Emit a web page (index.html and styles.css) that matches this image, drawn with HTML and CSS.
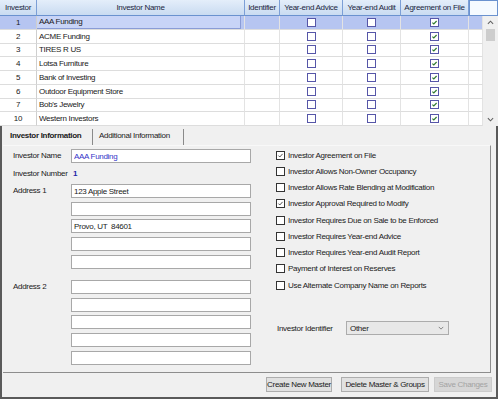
FILE: index.html
```html
<!DOCTYPE html>
<html lang="en">
<head>
  <meta charset="UTF-8">
  <title>Investors</title>
  <link rel="stylesheet" href="styles.css">
</head>
<body>
  <div class="window">
    <div class="grid-head">
      <div class="hcell w-num">Investor</div>
      <div class="hcell w-name">Investor Name</div>
      <div class="hcell w-id">Identifier</div>
      <div class="hcell w-adv">Year-end Advice</div>
      <div class="hcell w-aud">Year-end Audit</div>
      <div class="hcell w-agr">Agreement on File</div>
      <div class="hcell hcell-blank"></div>
    </div>

    <div class="grid-body">
      <div class="rows">
        <div class="row selected">
          <div class="cell w-num">1</div>
          <div class="cell w-name"><span class="focus">AAA Funding</span></div>
          <div class="cell w-id"></div>
          <div class="cell w-adv"><span class="gbox"></span></div>
          <div class="cell w-aud"><span class="gbox"></span></div>
          <div class="cell w-agr"><span class="gbox"><svg viewBox="0 0 8 8"><path d="M1.6 4.1 L3.2 5.7 L6.4 2.3" /></svg></span></div>
          <div class="cell w-pad"></div>
        </div>
        <div class="row">
          <div class="cell w-num">2</div>
          <div class="cell w-name">ACME Funding</div>
          <div class="cell w-id"></div>
          <div class="cell w-adv"><span class="gbox"></span></div>
          <div class="cell w-aud"><span class="gbox"></span></div>
          <div class="cell w-agr"><span class="gbox"><svg viewBox="0 0 8 8"><path d="M1.6 4.1 L3.2 5.7 L6.4 2.3" /></svg></span></div>
          <div class="cell w-pad"></div>
        </div>
        <div class="row">
          <div class="cell w-num">3</div>
          <div class="cell w-name">TIRES R US</div>
          <div class="cell w-id"></div>
          <div class="cell w-adv"><span class="gbox"></span></div>
          <div class="cell w-aud"><span class="gbox"></span></div>
          <div class="cell w-agr"><span class="gbox"><svg viewBox="0 0 8 8"><path d="M1.6 4.1 L3.2 5.7 L6.4 2.3" /></svg></span></div>
          <div class="cell w-pad"></div>
        </div>
        <div class="row">
          <div class="cell w-num">4</div>
          <div class="cell w-name">Lotsa Furniture</div>
          <div class="cell w-id"></div>
          <div class="cell w-adv"><span class="gbox"></span></div>
          <div class="cell w-aud"><span class="gbox"></span></div>
          <div class="cell w-agr"><span class="gbox"><svg viewBox="0 0 8 8"><path d="M1.6 4.1 L3.2 5.7 L6.4 2.3" /></svg></span></div>
          <div class="cell w-pad"></div>
        </div>
        <div class="row">
          <div class="cell w-num">5</div>
          <div class="cell w-name">Bank of Investing</div>
          <div class="cell w-id"></div>
          <div class="cell w-adv"><span class="gbox"></span></div>
          <div class="cell w-aud"><span class="gbox"></span></div>
          <div class="cell w-agr"><span class="gbox"><svg viewBox="0 0 8 8"><path d="M1.6 4.1 L3.2 5.7 L6.4 2.3" /></svg></span></div>
          <div class="cell w-pad"></div>
        </div>
        <div class="row">
          <div class="cell w-num">6</div>
          <div class="cell w-name">Outdoor Equipment Store</div>
          <div class="cell w-id"></div>
          <div class="cell w-adv"><span class="gbox"></span></div>
          <div class="cell w-aud"><span class="gbox"></span></div>
          <div class="cell w-agr"><span class="gbox"><svg viewBox="0 0 8 8"><path d="M1.6 4.1 L3.2 5.7 L6.4 2.3" /></svg></span></div>
          <div class="cell w-pad"></div>
        </div>
        <div class="row">
          <div class="cell w-num">7</div>
          <div class="cell w-name">Bob's Jewelry</div>
          <div class="cell w-id"></div>
          <div class="cell w-adv"><span class="gbox"></span></div>
          <div class="cell w-aud"><span class="gbox"></span></div>
          <div class="cell w-agr"><span class="gbox"><svg viewBox="0 0 8 8"><path d="M1.6 4.1 L3.2 5.7 L6.4 2.3" /></svg></span></div>
          <div class="cell w-pad"></div>
        </div>
        <div class="row">
          <div class="cell w-num">10</div>
          <div class="cell w-name">Western Investors</div>
          <div class="cell w-id"></div>
          <div class="cell w-adv"><span class="gbox"></span></div>
          <div class="cell w-aud"><span class="gbox"></span></div>
          <div class="cell w-agr"><span class="gbox"><svg viewBox="0 0 8 8"><path d="M1.6 4.1 L3.2 5.7 L6.4 2.3" /></svg></span></div>
          <div class="cell w-pad"></div>
        </div>
      </div>

      <div class="scrollbar">
        <svg class="arrow" viewBox="0 0 8 5"><path d="M1 4 L4 1 L7 4" /></svg>
        <div class="thumb"></div>
        <div class="track"></div>
        <svg class="arrow" viewBox="0 0 8 5"><path d="M1 1 L4 4 L7 1" /></svg>
      </div>
    </div>

    <div class="panel">
      <div class="tabs">
        <div class="tab tab-active">Investor Information</div>
        <div class="tab">Additional Information</div>
      </div>

      <div class="tabpage">
        <div class="form-col">
          <div class="frow">
            <span class="flabel">Investor Name</span>
            <input class="tbox tbox-blue" type="text" value="AAA Funding">
          </div>
          <div class="frow">
            <span class="flabel">Investor Number</span>
            <span class="numval">1</span>
          </div>
          <div class="frow">
            <span class="flabel">Address 1</span>
            <div class="inputs">
              <input class="tbox" type="text" value="123 Apple Street">
              <input class="tbox" type="text" value="">
              <input class="tbox" type="text" value="Provo, UT  84601">
              <input class="tbox" type="text" value="">
              <input class="tbox" type="text" value="">
            </div>
          </div>
          <div class="frow frow-gap">
            <span class="flabel">Address 2</span>
            <div class="inputs">
              <input class="tbox" type="text" value="">
              <input class="tbox" type="text" value="">
              <input class="tbox" type="text" value="">
              <input class="tbox" type="text" value="">
              <input class="tbox" type="text" value="">
            </div>
          </div>
        </div>

        <div class="check-col">
          <div class="check"><span class="cbox"><svg viewBox="0 0 9 9"><path d="M1.8 4.6 L3.6 6.4 L7.2 2.4" /></svg></span>Investor Agreement on File</div>
          <div class="check"><span class="cbox"></span>Investor Allows Non-Owner Occupancy</div>
          <div class="check"><span class="cbox"></span>Investor Allows Rate Blending at Modification</div>
          <div class="check"><span class="cbox"><svg viewBox="0 0 9 9"><path d="M1.8 4.6 L3.6 6.4 L7.2 2.4" /></svg></span>Investor Approval Required to Modify</div>
          <div class="check"><span class="cbox"></span>Investor Requires Due on Sale to be Enforced</div>
          <div class="check"><span class="cbox"></span>Investor Requires Year-end Advice</div>
          <div class="check"><span class="cbox"></span>Investor Requires Year-end Audit Report</div>
          <div class="check"><span class="cbox"></span>Payment of Interest on Reserves</div>
          <div class="check"><span class="cbox"></span>Use Alternate Company Name on Reports</div>

          <div class="ident-row">
            <span class="ident-label">Investor Identifier</span>
            <div class="select">
              <span>Other</span>
              <svg viewBox="0 0 8 5"><path d="M1 1 L4 4 L7 1" /></svg>
            </div>
          </div>
        </div>
      </div>

      <div class="buttons">
        <button class="btn btn-create">Create New Master</button>
        <button class="btn btn-delete">Delete Master &amp; Groups</button>
        <button class="btn btn-save" disabled>Save Changes</button>
      </div>
    </div>
  </div>
</body>
</html>
```

FILE: styles.css
```css
body {
  margin: 0;
  font-family: "Liberation Sans", Arial, sans-serif;
  font-size: 8px;
  letter-spacing: -0.3px;
  color: #1a1a1a;
  background: #ffffff;
}

.window {
  width: 498px;
  height: 399px;
  display: flex;
  flex-direction: column;
  overflow: hidden;
}

/* grid columns */
.w-num { width: 37px; }
.w-name { width: 208px; }
.w-id { width: 35px; }
.w-adv { width: 63px; }
.w-aud { width: 58px; }
.w-agr { width: 68px; }
.w-pad { width: 14px; }

.grid-head {
  display: flex;
  height: 16px;
}

.hcell {
  box-sizing: border-box;
  height: 16px;
  background: linear-gradient(#e4eefa, #c9dbf1);
  border-right: 1px solid #7c9fd6;
  border-bottom: 1px solid #6a92cf;
  color: #1c2640;
  display: flex;
  align-items: center;
  justify-content: center;
  white-space: nowrap;
}

.hcell-blank {
  width: 29px;
  background: #f5faff;
  border: 1px solid #6a92cf;
}

.grid-body {
  display: flex;
  height: 110px;
}

.rows {
  width: 483px;
}

.row {
  display: flex;
  height: 13.75px;
}

.cell {
  box-sizing: border-box;
  border-right: 1px solid #e3e3e3;
  border-bottom: 1px solid #dddddd;
  display: flex;
  align-items: center;
  justify-content: center;
  white-space: nowrap;
}

.cell.w-num {
  border-right-color: #cfcfcf;
}

.cell.w-name {
  justify-content: flex-start;
  padding-left: 2px;
}

.row.selected .cell {
  background: #b6c5f1;
}

.focus {
  box-sizing: border-box;
  width: 204px;
  height: 100%;
  margin-left: -2px;
  padding-left: 2px;
  display: flex;
  align-items: center;
  background: #c8d4f7;
  border-right: 1px solid #8a9cd6;
  border-bottom: 1px solid #8a9cd6;
}

.gbox {
  box-sizing: border-box;
  width: 9px;
  height: 9px;
  border: 1px solid #5656a8;
  background: #ffffff;
  display: flex;
}

.gbox svg {
  width: 7px;
  height: 7px;
}

.gbox path {
  stroke: #2f7a2f;
  stroke-width: 1.3;
  fill: none;
}

.scrollbar {
  width: 15px;
  background: #f0f0f0;
  display: flex;
  flex-direction: column;
  align-items: center;
}

.scrollbar .arrow {
  width: 7px;
  height: 5px;
  margin: 4px 0;
}

.scrollbar path {
  stroke: #606060;
  stroke-width: 1.2;
  fill: none;
}

.thumb {
  width: 9px;
  height: 12px;
  background: #cdcdcd;
}

.track {
  flex: 1;
}

/* lower panel */
.panel {
  flex: 1;
  background: #f0f0f0;
  border: 2px solid #5a5a5a;
  border-top: none;
  display: flex;
  flex-direction: column;
}

.tabs {
  height: 19px;
  display: flex;
  align-items: flex-end;
}

.tab {
  box-sizing: border-box;
  width: 91px;
  height: 16px;
  padding: 0 0 3px 6px;
  border-right: 1px solid #8a8a8a;
  display: flex;
  align-items: center;
  white-space: nowrap;
}

.tab-active {
  padding-left: 8px;
  font-weight: bold;
}

.tabpage {
  box-sizing: border-box;
  height: 228px;
  margin: 0 5px 0 1px;
  border-top: 1px solid #f8f8f8;
  border-right: 1px solid #8d8d8d;
  border-bottom: 1px solid #8d8d8d;
  padding-left: 10px;
  display: flex;
}

.form-col {
  width: 238px;
  padding-top: 3px;
  display: flex;
  flex-direction: column;
  gap: 3.6px;
}

.frow {
  display: flex;
  align-items: flex-start;
}

.frow-gap {
  margin-top: 8px;
}

.flabel {
  width: 58px;
  line-height: 14px;
  flex-shrink: 0;
}

.numval {
  line-height: 14px;
  padding-left: 2px;
  color: #2323a8;
  font-weight: bold;
}

.inputs {
  display: flex;
  flex-direction: column;
  gap: 3.6px;
}

.tbox {
  box-sizing: border-box;
  width: 180px;
  height: 14px;
  margin: 0;
  padding: 0 2px;
  border: 1px solid #a8a8a8;
  background: #ffffff;
  font: inherit;
  letter-spacing: inherit;
  color: #1a1a1a;
  outline: none;
}

.tbox-blue {
  color: #3535c8;
}

.check-col {
  margin-left: 25px;
  padding-top: 1px;
  display: flex;
  flex-direction: column;
}

.check {
  height: 16.25px;
  display: flex;
  align-items: center;
  gap: 3px;
  white-space: nowrap;
}

.cbox {
  box-sizing: border-box;
  width: 9px;
  height: 9px;
  border: 1px solid #333333;
  background: #ffffff;
  display: flex;
}

.cbox svg {
  width: 7px;
  height: 7px;
}

.cbox path {
  stroke: #333333;
  stroke-width: 1.1;
  fill: none;
}

.ident-row {
  margin-top: 28px;
  display: flex;
  align-items: center;
  padding-left: 1px;
}

.ident-label {
  width: 69px;
}

.select {
  box-sizing: border-box;
  width: 103px;
  height: 14px;
  padding: 0 4px 0 3px;
  background: #e8e8e8;
  border: 1px solid #acacac;
  display: flex;
  align-items: center;
  justify-content: space-between;
}

.select svg {
  width: 6px;
  height: 4px;
}

.select path {
  stroke: #707070;
  stroke-width: 1.1;
  fill: none;
}

.buttons {
  display: flex;
  justify-content: flex-end;
  padding: 4px 4px 0 0;
}

.btn {
  box-sizing: border-box;
  height: 15px;
  padding: 0;
  background: #e1e1e1;
  border: 1px solid #adadad;
  font: inherit;
  letter-spacing: inherit;
  color: #1a1a1a;
}

.btn-create {
  width: 66px;
  margin-right: 9px;
}

.btn-delete {
  width: 88px;
  margin-right: 5px;
}

.btn-save {
  width: 58px;
  background: #d6d6d6;
  border-color: #cbcbcb;
  color: #a3a3a3;
}
```
